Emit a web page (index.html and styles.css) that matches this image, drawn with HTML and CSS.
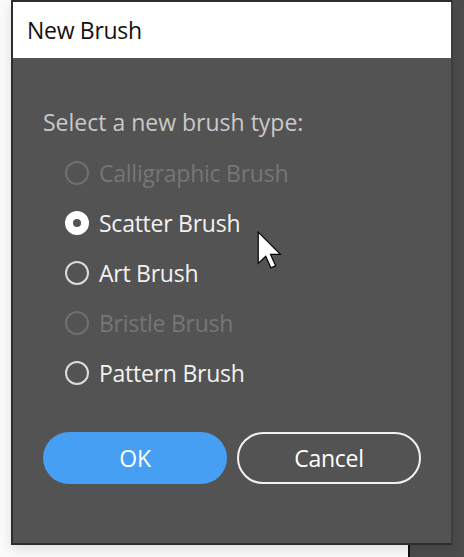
FILE: index.html
```html
<!DOCTYPE html>
<html>
<head>
<meta charset="utf-8">
<link rel="stylesheet" href="styles.css">
</head>
<body>
<div class="backdrop"></div>
<div class="dialog">
  <div class="titlebar">New Brush</div>
  <div class="content">
    <div class="prompt">Select a new brush type:</div>
    <div class="options">
      <div class="option disabled"><span class="radio"></span><span class="label">Calligraphic Brush</span></div>
      <div class="option checked"><span class="radio"></span><span class="label">Scatter Brush</span></div>
      <div class="option"><span class="radio"></span><span class="label">Art Brush</span></div>
      <div class="option disabled"><span class="radio"></span><span class="label">Bristle Brush</span></div>
      <div class="option"><span class="radio"></span><span class="label">Pattern Brush</span></div>
    </div>
    <div class="buttons">
      <button class="btn primary">OK</button>
      <button class="btn secondary">Cancel</button>
    </div>
  </div>
  <svg class="cursor" width="25" height="38" viewBox="0 0 12.6 19.2">
    <path d="M0.6 0.6 L0.6 16.4 L4.4 12.8 L7 18.6 L9.4 17.6 L6.8 11.8 L11.8 11.8 Z" fill="#fff" stroke="#000" stroke-width="0.6" stroke-linejoin="miter"/>
  </svg>
</div>
</body>
</html>
```
FILE: styles.css
```css
html, body {
  margin: 0;
  padding: 0;
}
body {
  width: 464px;
  height: 557px;
  background: #fbfbfb;
  position: relative;
  overflow: hidden;
  font-family: "Open Sans", "Noto Sans", sans-serif;
  padding-left: 11px;
  box-sizing: border-box;
}
.backdrop {
  position: absolute;
  left: 408px;
  top: 0;
  width: 56px;
  height: 557px;
  background: #4c4c4c;
  border-left: 2px solid #111;
  box-sizing: border-box;
}
.dialog {
  position: relative;
  z-index: 1;
  width: 442px;
  height: 545px;
  box-sizing: border-box;
  background: #535353;
  border: 2px solid rgba(0, 0, 0, 0.45);
  border-right-color: rgba(0, 0, 0, 0.25);
  box-shadow: 0 4px 12px rgba(0, 0, 0, 0.12);
  display: flex;
  flex-direction: column;
}
.titlebar {
  height: 56px;
  background: #ffffff;
  color: #111;
  font-size: 23px;
  line-height: 56px;
  padding-left: 14px;
  letter-spacing: -0.3px;
}
.content {
  padding: 50px 0 0 30px;
  display: flex;
  flex-direction: column;
}
.prompt {
  color: #c9c9c9;
  font-size: 23px;
  line-height: 28px;
  letter-spacing: 0;
}
.options {
  margin-top: 12px;
  padding-left: 22px;
  display: flex;
  flex-direction: column;
}
.option {
  height: 50px;
  display: flex;
  align-items: center;
  gap: 10px;
  color: #f2f2f2;
  font-size: 23px;
  letter-spacing: -0.25px;
}
.radio {
  width: 24px;
  height: 24px;
  box-sizing: border-box;
  border: 2px solid #dcdcdc;
  border-radius: 50%;
  display: flex;
  align-items: center;
  justify-content: center;
}
.option.disabled {
  color: #767676;
}
.option.disabled .radio {
  border-color: #6f6f6f;
}
.option.checked .radio {
  background: #ffffff;
  border-color: #ffffff;
}
.option.checked .radio::after {
  content: "";
  width: 8px;
  height: 8px;
  border-radius: 50%;
  background: #535353;
}
.buttons {
  margin-top: 34px;
  display: flex;
  gap: 10px;
}
.btn {
  width: 184px;
  height: 52px;
  border-radius: 26px;
  font-family: "Open Sans", "Noto Sans", sans-serif;
  font-size: 23px;
  color: #fff;
  box-sizing: border-box;
  padding: 0;
  letter-spacing: -0.25px;
}
.btn.primary {
  background: #479ff3;
  border: none;
}
.btn.secondary {
  background: transparent;
  border: 2px solid #f2f2f2;
}
.cursor {
  position: absolute;
  left: 244px;
  top: 229px;
}
```
